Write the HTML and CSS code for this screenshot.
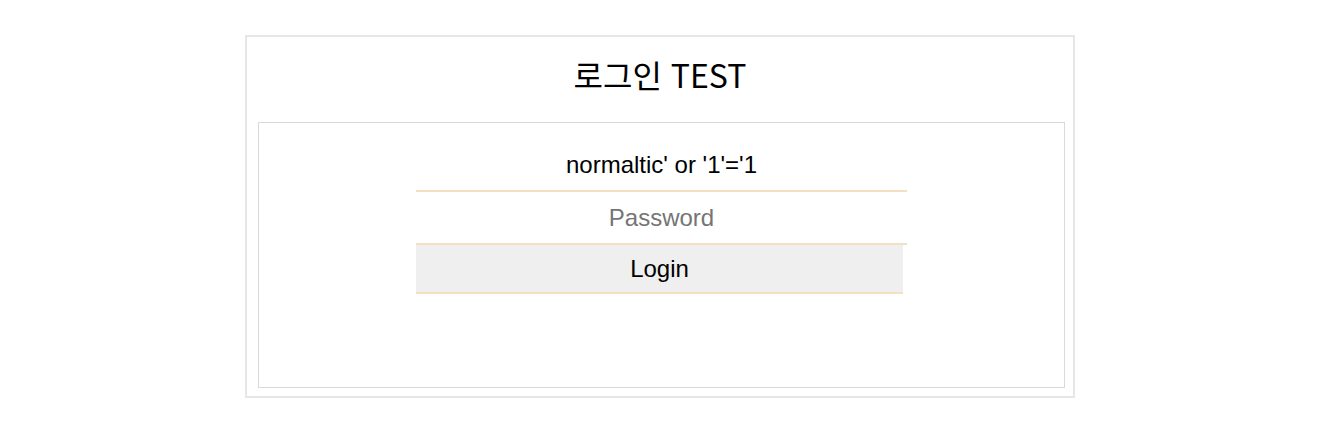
FILE: index.html
```html
<!DOCTYPE html>
<html lang="ko">
<head>
<meta charset="utf-8">
<title>로그인 TEST</title>
<link rel="stylesheet" href="styles.css">
</head>
<body>
<div class="outer">
  <h1 class="title">로그인 TEST</h1>
  <div class="inner">
    <form class="login-form">
      <input class="field" type="text" value="normaltic' or '1'='1">
      <input class="field" type="password" placeholder="Password">
      <button class="btn" type="button">Login</button>
    </form>
  </div>
</div>
</body>
</html>
```
FILE: styles.css
```css
html, body {
  margin: 0;
  padding: 0;
  background: #ffffff;
}

body {
  font-family: "Liberation Sans", Arial, sans-serif;
}

.outer {
  box-sizing: border-box;
  width: 830px;
  height: 363px;
  margin: 35px auto 0;
  border: 2px solid #e6e6e6;
  display: flex;
  flex-direction: column;
}

.title {
  margin: 0;
  padding-top: 17px;
  height: 40px;
  line-height: 40px;
  font-family: "Noto Sans CJK KR", "Noto Sans", sans-serif;
  font-weight: 400;
  font-size: 32px;
  color: #000;
  text-align: center;
}

.inner {
  box-sizing: border-box;
  margin: 28px 8px 8px 11px;
  flex: 1;
  border: 1px solid #d9d9d9;
}

.login-form {
  width: 491px;
  margin: 16px auto 0;
  display: flex;
  flex-direction: column;
  align-items: flex-start;
}

.field {
  box-sizing: border-box;
  width: 491px;
  height: 53px;
  margin: 0;
  padding: 0;
  border: none;
  border-bottom: 2px solid #f3e0c0;
  outline: none;
  background: transparent;
  font-family: "Liberation Sans", Arial, sans-serif;
  font-size: 24px;
  color: #000;
  text-align: center;
}

.field::placeholder {
  color: #757575;
}

.btn {
  box-sizing: border-box;
  width: 487px;
  height: 49px;
  margin: 0;
  padding: 0;
  border: none;
  border-bottom: 2px solid #f3e0c0;
  background: #efefef;
  font-family: "Liberation Sans", Arial, sans-serif;
  font-size: 24px;
  color: #000;
  text-align: center;
}
```
